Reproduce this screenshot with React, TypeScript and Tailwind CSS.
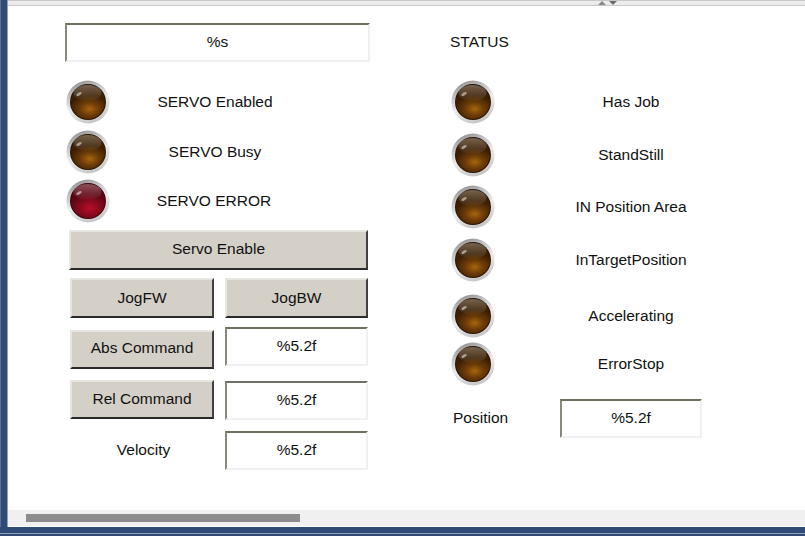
import * as React from 'react';

const tones = {
  off: { hi: '#a9650c', mid: '#6e3d07', low: '#3b1f04', rim: '#2a1503' },
  err: { hi: '#b50f28', mid: '#8f0a1e', low: '#5c0513', rim: '#3d030c' },
};

function Led({ id, tone = 'off' }: { id: string; tone?: 'off' | 'err' }) {
  const c = tones[tone];
  return (
    <svg width="44" height="44" viewBox="0 0 44 44" className="shrink-0 [filter:blur(0.4px)]">
      <defs>
        <linearGradient id={`${id}-ring`} x1="0.1" y1="0" x2="0.5" y2="1">
          <stop offset="0" stopColor="#858585" />
          <stop offset="0.3" stopColor="#c0c0c0" />
          <stop offset="0.6" stopColor="#ececec" />
          <stop offset="1" stopColor="#c8c8c8" />
        </linearGradient>
        <radialGradient id={`${id}-core`} cx="0.55" cy="0.58" r="0.58" gradientTransform="translate(0 0.3) scale(1 0.7)">
          <stop offset="0" stopColor={c.hi} />
          <stop offset="0.45" stopColor={c.mid} />
          <stop offset="1" stopColor={c.low} />
        </radialGradient>
        <linearGradient id={`${id}-gloss`} x1="0" y1="0" x2="0" y2="1">
          <stop offset="0" stopColor="#ffffff" stopOpacity="0.3" />
          <stop offset="1" stopColor="#ffffff" stopOpacity="0.02" />
        </linearGradient>
      </defs>
      <circle cx="22" cy="22" r="21.5" fill={`url(#${id}-ring)`} />
      <circle cx="22" cy="22" r="18" fill={c.rim} />
      <circle cx="22" cy="22" r="17" fill={`url(#${id}-core)`} />
      <ellipse cx="21.5" cy="13" rx="14" ry="8" fill={`url(#${id}-gloss)`} />
      <ellipse cx="13" cy="14" rx="3" ry="1.3" fill="#ffffff" fillOpacity="0.5" transform="rotate(-30 13 14)" />
    </svg>
  );
}

function Field({ text, className }: { text: string; className: string }) {
  return (
    <div className={`flex items-center justify-center border-2 border-t-[#716f64] border-l-[#8a887c] border-r-[#f0f0f0] border-b-[#f0f0f0] bg-white pb-0.5 ${className}`}>
      {text}
    </div>
  );
}

function Btn({ text, className }: { text: string; className: string }) {
  return (
    <div className={`flex items-center justify-center border-2 border-t-[#e8e6e0] border-l-[#e8e6e0] border-r-[#404040] border-b-[#2a2a2a] bg-[#d4d0c8] ${className}`}>
      {text}
    </div>
  );
}

export default function App() {
  return (
    <div className="flex h-[536px] w-[805px] flex-col overflow-hidden bg-white text-[15.5px] text-[#111] [font-family:'Liberation_Sans',Arial,sans-serif]">
      <div className="flex min-h-0 flex-1">
        {/* window edge */}
        <div className="w-[8px] shrink-0 border-l border-r border-l-[#5a7098] border-r-[#8fa0bc] bg-[#2f4a75]" />

        <div className="flex min-w-0 flex-1 flex-col">
          {/* splitter */}
          <div className="flex h-[6px] shrink-0 items-center gap-[3px] border-y border-y-[#c8c8c8] bg-[#ececec] pl-[590px]">
            <svg width="8" height="4" viewBox="0 0 8 4"><path d="M4 0L8 4H0Z" fill="#8a8a8a" /></svg>
            <svg width="8" height="4" viewBox="0 0 8 4"><path d="M0 0H8L4 4Z" fill="#6e6e6e" /></svg>
          </div>

          <div className="flex min-h-0 flex-1 pl-[57px] pt-[17px]">
            {/* left column */}
            <div className="flex w-[305px] shrink-0 flex-col">
              <Field text="%s" className="h-[39px] w-[305px]" />
              <div className="ml-px mt-[18px] flex h-[44px] items-center">
                <Led id="s1" />
                <div className="w-[210px] text-center">SERVO Enabled</div>
              </div>
              <div className="ml-px mt-[6px] flex h-[44px] items-center">
                <Led id="s2" />
                <div className="w-[210px] text-center">SERVO Busy</div>
              </div>
              <div className="ml-px mt-[5px] flex h-[44px] items-center">
                <Led id="s3" tone="err" />
                <div className="w-[208px] text-center">SERVO ERROR</div>
              </div>
              <Btn text="Servo Enable" className="ml-[4px] mt-[7px] h-[40px] w-[299px] pb-0.5" />
              <div className="ml-[5px] mt-[8px] flex gap-[11px]">
                <Btn text="JogFW" className="h-[40px] w-[144px]" />
                <Btn text="JogBW" className="h-[40px] w-[143px]" />
              </div>
              <div className="ml-[5px] mt-[9px] flex gap-[11px]">
                <div className="flex w-[144px] flex-col pt-[3px]">
                  <Btn text="Abs Command" className="h-[39px] pb-1" />
                  <Btn text="Rel Command" className="mt-[11px] h-[39px] pb-0.5" />
                  <div className="mt-[11px] flex h-[39px] items-center justify-center pl-[3px]">Velocity</div>
                </div>
                <div className="flex w-[143px] flex-col">
                  <Field text="%5.2f" className="h-[39px]" />
                  <Field text="%5.2f" className="mt-[15px] h-[39px]" />
                  <Field text="%5.2f" className="mt-[11px] h-[39px]" />
                </div>
              </div>
            </div>

            {/* right column */}
            <div className="ml-[80px] flex flex-col">
              <div className="flex h-[39px] items-center pb-0.5">STATUS</div>
              <div className="ml-px mt-[18px] flex h-[44px] items-center">
                <Led id="r1" />
                <div className="w-[272px] text-center">Has Job</div>
              </div>
              <div className="ml-px mt-[9px] flex h-[44px] items-center">
                <Led id="r2" />
                <div className="w-[272px] text-center">StandStill</div>
              </div>
              <div className="ml-px mt-[8px] flex h-[44px] items-center">
                <Led id="r3" />
                <div className="w-[272px] text-center">IN Position Area</div>
              </div>
              <div className="ml-px mt-[9px] flex h-[44px] items-center">
                <Led id="r4" />
                <div className="w-[272px] text-center">InTargetPosition</div>
              </div>
              <div className="ml-px mt-[12px] flex h-[44px] items-center">
                <Led id="r5" />
                <div className="w-[272px] text-center">Accelerating</div>
              </div>
              <div className="ml-px mt-[4px] flex h-[44px] items-center">
                <Led id="r6" />
                <div className="w-[272px] text-center">ErrorStop</div>
              </div>
              <div className="ml-[3px] mt-[13px] flex items-center">
                <div className="w-[107px] pb-0.5">Position</div>
                <Field text="%5.2f" className="h-[39px] w-[142px]" />
              </div>
            </div>
          </div>

          {/* horizontal scrollbar */}
          <div className="flex h-[17px] shrink-0 items-start border-b border-b-white bg-[#f0f0f0] pl-[18px] pt-[4px]">
            <div className="h-[8px] w-[274px] bg-[#8c8c8c]" />
          </div>
        </div>
      </div>
      <div className="h-[9px] shrink-0 border-b-2 border-b-[#2f4a75] bg-[#2f4a75] shadow-[inset_0_-1px_0_#8fa0bc]" />
    </div>
  );
}
